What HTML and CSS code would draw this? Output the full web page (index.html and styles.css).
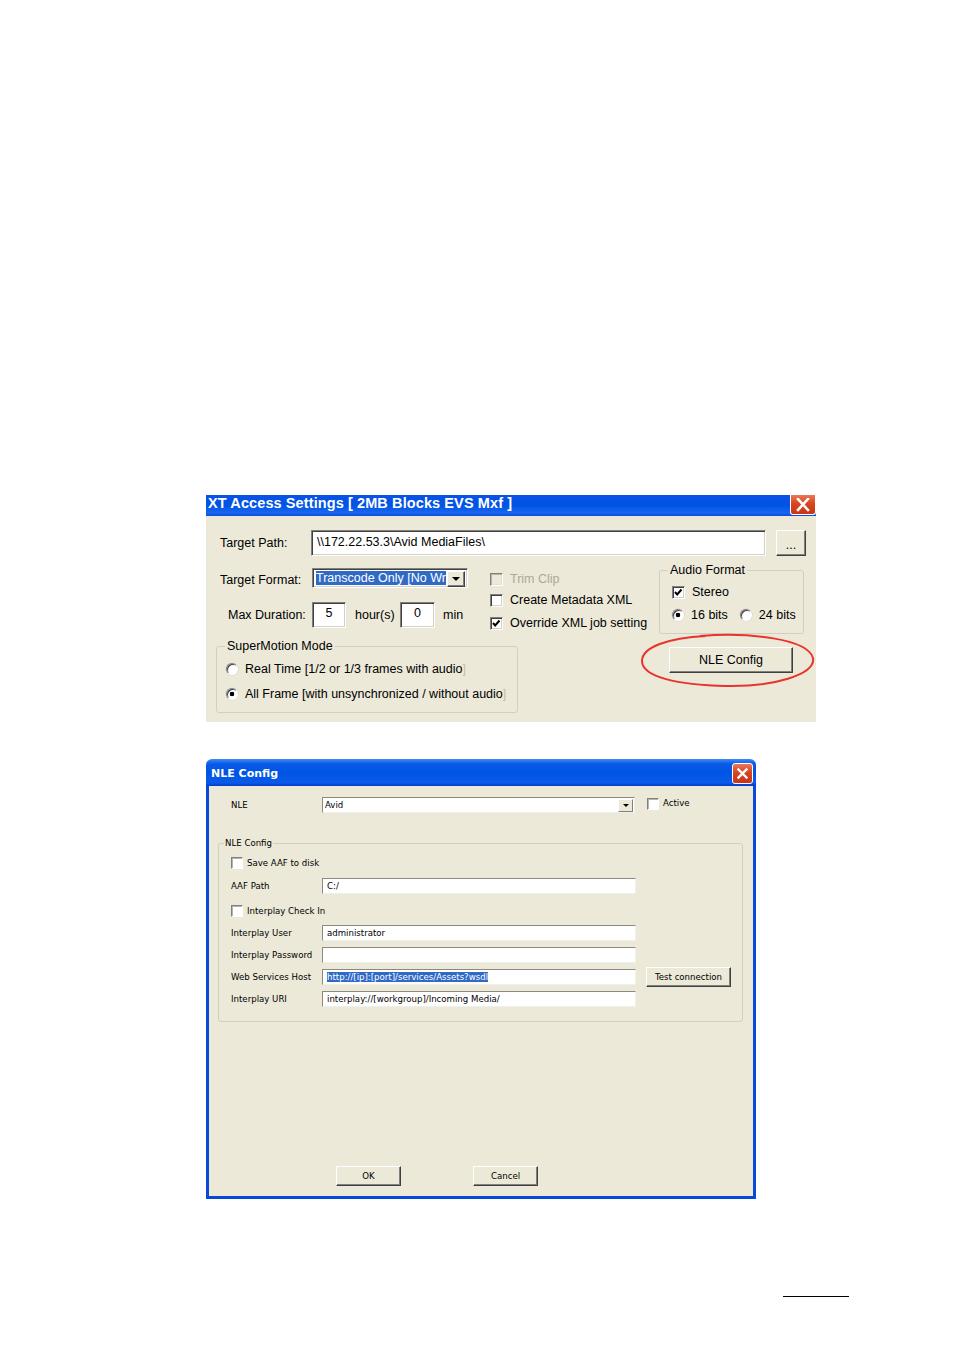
FILE: index.html
```html
<!DOCTYPE html>
<html lang="en">
<head>
    <meta charset="UTF-8">
    <title>XT Access Settings / NLE Config</title>
    <link rel="stylesheet" href="styles.css">
</head>
<body>
<div class="page">

    <!-- XT Access settings (cropped window) -->
    <div class="xt">
        <div class="xt-title">
            <span>XT Access Settings [ 2MB Blocks EVS Mxf ]</span>
            <div class="close close-xt">
                <svg width="16" height="14" viewBox="0 0 16 14"><path d="M3 1l10 11M13 1L3 12" stroke="#fff" stroke-width="2.6" stroke-linecap="square"/></svg>
            </div>
        </div>
        <div class="xt-body">
            <div class="xt-row">
                <span class="lbl-path">Target Path:</span>
                <div class="field path">\\172.22.53.3\Avid MediaFiles\</div>
                <div class="btn btn-dots">...</div>
            </div>

            <div class="xt-main">
                <div class="xt-left">
                    <div class="fmt-row">
                        <span class="lbl-fmt">Target Format:</span>
                        <div class="combo">
                            <div class="combo-text"><span class="hl">Transcode Only [No Wr</span></div>
                            <div class="combo-btn"><i class="tri"></i></div>
                        </div>
                    </div>
                    <div class="dur-row">
                        <span class="lbl-dur">Max Duration:</span>
                        <div class="field num">5</div>
                        <span class="lbl-hour">hour(s)</span>
                        <div class="field num num-min">0</div>
                        <span class="lbl-min">min</span>
                    </div>
                    <fieldset class="group sm-group">
                        <legend>SuperMotion Mode</legend>
                        <div class="opt"><span class="radio"></span>Real Time [1/2 or 1/3 frames with audio<span class="cut">]</span></div>
                        <div class="opt opt-2"><span class="radio on"></span>All Frame [with unsynchronized / without audio<span class="cut">]</span></div>
                    </fieldset>
                </div>

                <div class="xt-mid">
                    <div class="opt off"><span class="check dis"></span>Trim Clip</div>
                    <div class="opt opt-meta"><span class="check"></span>Create Metadata XML</div>
                    <div class="opt opt-over"><span class="check"><svg width="11" height="11" viewBox="0 0 11 11"><path d="M2 5l2.2 2.4L8.5 2.5" fill="none" stroke="#000" stroke-width="2"/></svg></span>Override XML job setting</div>
                </div>

                <div class="xt-right">
                    <fieldset class="group audio-group">
                        <legend>Audio Format</legend>
                        <div class="opt"><span class="check"><svg width="11" height="11" viewBox="0 0 11 11"><path d="M2 5l2.2 2.4L8.5 2.5" fill="none" stroke="#000" stroke-width="2"/></svg></span>Stereo</div>
                        <div class="opt opt-bits">
                            <span class="radio on"></span>16 bits
                            <span class="radio r24"></span>24 bits
                        </div>
                    </fieldset>
                    <div class="btn btn-nle">NLE Config</div>
                </div>
            </div>

            <svg class="ring" width="176" height="56" viewBox="0 0 176 56">
                <path d="M60 3 C 110 -1, 168 6, 173 25 C 176 42, 132 54, 86 53 C 38 52, 2 44, 2 28 C 2 14, 28 5, 66 3" fill="none" stroke="#e8342c" stroke-width="2"/>
            </svg>
        </div>
    </div>

    <!-- NLE Config window -->
    <div class="nle">
        <div class="nle-title">
            <span>NLE Config</span>
            <div class="close close-nle">
                <svg width="13" height="13" viewBox="0 0 13 13"><path d="M2.5 2.5l8 8M10.5 2.5l-8 8" stroke="#fff" stroke-width="2.4" stroke-linecap="square"/></svg>
            </div>
        </div>
        <div class="nle-body">
            <div class="nle-top">
                <span class="nlbl">NLE</span>
                <div class="xcombo"><span>Avid</span><div class="xcombo-btn"><i class="tri tri-s"></i></div></div>
                <span class="xcheck xcheck-active"></span><span class="active-txt">Active</span>
            </div>

            <fieldset class="group nle-group">
                <legend>NLE Config</legend>
                <div class="nrow chk"><span class="xcheck"></span>Save AAF to disk</div>
                <div class="nrow"><span class="nlbl">AAF Path</span><div class="xfield">C:/</div></div>
                <div class="nrow chk"><span class="xcheck"></span>Interplay Check In</div>
                <div class="nrow"><span class="nlbl">Interplay User</span><div class="xfield">administrator</div></div>
                <div class="nrow"><span class="nlbl">Interplay Password</span><div class="xfield"></div></div>
                <div class="nrow"><span class="nlbl">Web Services Host</span><div class="xfield"><span class="hl">http://[ip]:[port]/services/Assets?wsdl</span></div><div class="xbtn btn-test">Test connection</div></div>
                <div class="nrow"><span class="nlbl">Interplay URI</span><div class="xfield">interplay://[workgroup]/Incoming Media/</div></div>
            </fieldset>

            <div class="nle-actions">
                <div class="xbtn btn-ok">OK</div>
                <div class="xbtn btn-cancel">Cancel</div>
            </div>
        </div>
    </div>

    <div class="rule"></div>
</div>
</body>
</html>
```

FILE: styles.css
```css
* { margin: 0; padding: 0; box-sizing: border-box; }

body {
    background: #fff;
    font-family: "Liberation Sans", Arial, sans-serif;
    color: #000;
}

.page {
    padding: 495px 0 0 206px;
    height: 1350px;
    overflow: hidden;
}

/* ---------- shared bits ---------- */
.hl { background: #316ac5; color: #fff; }

.tri {
    display: block;
    width: 0;
    height: 0;
    border-left: 4px solid transparent;
    border-right: 4px solid transparent;
    border-top: 4px solid #000;
}
.tri-s { border-width: 3px 3px 0; }

.group {
    border: 1px solid #d0d0bf;
    border-radius: 3px;
}
.group legend { padding: 0 2px; }

.close {
    display: flex;
    align-items: center;
    justify-content: center;
    background: linear-gradient(180deg, #e8785a 0%, #d8461e 45%, #c8341a 100%);
    border: 1px solid #fff;
}

.opt {
    display: flex;
    align-items: center;
    height: 20px;
    white-space: nowrap;
}

.radio {
    display: inline-block;
    flex: none;
    width: 12px;
    height: 12px;
    border-radius: 50%;
    border: 1px solid;
    border-color: #808080 #fff #fff #808080;
    background: #fff;
    box-shadow: inset 1px 1px #404040, 0 0 0 0.5px #d4d0c8;
    margin-right: 7px;
}
.radio.on { background: radial-gradient(circle, #000 0 2px, #fff 2.6px); }

.check {
    display: inline-flex;
    align-items: center;
    justify-content: center;
    flex: none;
    width: 13px;
    height: 13px;
    border: 1px solid;
    border-color: #808080 #fff #fff #808080;
    box-shadow: inset 1px 1px #404040, inset -1px -1px #d4d0c8;
    background: #fff;
    margin-right: 7px;
}
.check.dis { background: #ece9d8; box-shadow: inset 1px 1px #b8b4a8, inset -1px -1px #e4e0d4; }

.field {
    background: #fff;
    border: 1px solid;
    border-color: #808080 #fff #fff #808080;
    box-shadow: inset 1px 1px #404040, inset -1px -1px #d4d0c8;
    white-space: nowrap;
    overflow: hidden;
}

.btn {
    display: flex;
    align-items: center;
    justify-content: center;
    background: #ece9d8;
    border: 1px solid;
    border-color: #fff #404040 #404040 #fff;
    box-shadow: inset -1px -1px #808080;
}

/* ---------- XT access settings ---------- */
.xt { width: 610px; }

.xt-title {
    height: 21px;
    display: flex;
    justify-content: space-between;
    background: linear-gradient(180deg, #0a52e6 0%, #0054e3 50%, #1a66f0 85%, #0a4ed8 100%);
    overflow: hidden;
}
.xt-title span {
    color: #fff;
    font-weight: bold;
    font-size: 14.5px;
    line-height: 17px;
    padding-left: 2px;
    letter-spacing: 0.1px;
}
.close-xt {
    width: 26px;
    height: 20px;
    border-top: none;
    border-radius: 0 0 3px 3px;
}

.xt-body {
    position: relative;
    height: 206px;
    background: #ece9d8;
    padding: 14px 10px 0 10px;
    font-size: 12.5px;
}

.xt-row {
    display: flex;
    align-items: center;
    padding-left: 4px;
}
.lbl-path { width: 91px; }
.path {
    width: 455px;
    height: 26px;
    line-height: 22px;
    padding-left: 5px;
}
.btn-dots {
    width: 30px;
    height: 26px;
    margin-left: 10px;
    padding-top: 4px;
}

.xt-main {
    display: flex;
    margin-top: 12px;
}

.xt-left { width: 274px; flex: none; }

.fmt-row {
    display: flex;
    align-items: center;
    height: 20px;
    padding-left: 4px;
}
.lbl-fmt { width: 92px; padding-top: 4px; }

.combo {
    display: flex;
    width: 156px;
    height: 20px;
    background: #fff;
    border: 1px solid;
    border-color: #808080 #fff #fff #808080;
    box-shadow: inset 1px 1px #404040, inset -1px -1px #d4d0c8;
    padding: 2px;
}
.combo-text {
    flex: 1;
    overflow: hidden;
    white-space: nowrap;
    line-height: 15px;
    padding-left: 1px;
}
.combo-btn {
    width: 18px;
    height: 16px;
    display: flex;
    align-items: center;
    justify-content: center;
    background: #ece9d8;
    border: 1px solid;
    border-color: #fff #404040 #404040 #fff;
    box-shadow: inset -1px -1px #808080;
}

.dur-row {
    display: flex;
    align-items: center;
    height: 26px;
    margin-top: 14px;
    padding-left: 12px;
}
.lbl-dur { width: 84px; }
.num {
    width: 34px;
    height: 26px;
    text-align: center;
    line-height: 20px;
}
.num-min { width: 35px; }
.lbl-hour { width: 45px; margin-left: 9px; }
.lbl-min { margin-left: 8px; }

.sm-group {
    width: 302px;
    height: 74px;
    margin-top: 11px;
    padding: 6px 0 0 9px;
}
.sm-group legend { margin-left: -1px; }
.opt-2 { margin-top: 5px; }
.cut { color: #c8c090; }

.xt-mid { width: 169px; flex: none; padding-top: 1px; }
.off { color: #aca899; }
.opt-meta { margin-top: 1px; }
.opt-over { margin-top: 3px; }

.xt-right { width: 147px; flex: none; margin-top: -5px; }
.audio-group {
    width: 145px;
    height: 71px;
    padding: 5px 0 0 12px;
}
.audio-group legend { margin-left: -4px; }
.opt-bits { margin-top: 3px; }
.r24 { margin-left: 12px; }

.btn-nle {
    width: 124px;
    height: 26px;
    margin: 13px 0 0 10px;
}

.ring {
    position: absolute;
    left: 434px;
    top: 117px;
}

/* ---------- NLE config window ---------- */
.nle {
    width: 550px;
    margin-top: 37px;
    font-family: "DejaVu Sans", Tahoma, sans-serif;
    font-size: 8.6px;
}

.nle-title {
    height: 27px;
    display: flex;
    justify-content: space-between;
    align-items: center;
    padding: 0 3px 0 5px;
    border-radius: 6px 6px 0 0;
    background: linear-gradient(180deg, #3d8cf6 0%, #0a5ae8 18%, #0054e3 50%, #0a5ae8 88%, #003ccc 100%);
}
.nle-title span {
    color: #fff;
    font-weight: bold;
    font-size: 11px;
    margin-top: 2px;
}
.close-nle {
    width: 21px;
    height: 21px;
    border-radius: 3px;
    margin-top: 2px;
}

.nle-body {
    height: 413px;
    background: #ece9d8;
    border: 3px solid #0a48d8;
    border-top: none;
    display: flex;
    flex-direction: column;
}

.nle-top {
    display: flex;
    align-items: center;
    height: 16px;
    margin-top: 11px;
    padding-left: 22px;
}
.nlbl { width: 91px; flex: none; }

.xcombo {
    display: flex;
    align-items: center;
    width: 313px;
    height: 16px;
    background: #fff;
    border: 1px solid;
    border-color: #8a8a80 #f0f0ea #f0f0ea #8a8a80;
    padding-left: 2px;
}
.xcombo span { flex: 1; }
.xcombo-btn {
    width: 15px;
    height: 13px;
    margin-right: 1px;
    display: flex;
    align-items: center;
    justify-content: center;
    background: #ece9d8;
    border: 1px solid;
    border-color: #fff #808080 #808080 #fff;
}

.xcheck {
    display: inline-block;
    flex: none;
    width: 12px;
    height: 12px;
    background: #fff;
    border: 1px solid;
    border-color: #808080 #fff #fff #808080;
    box-shadow: inset 1px 1px #b8b4a8;
    margin-right: 4px;
}
.xcheck-active { margin-left: 12px; margin-top: -3px; }
.active-txt { margin-top: -4px; }

.nle-group {
    width: 525px;
    height: 184px;
    margin: 25px 0 0 9px;
    padding: 7px 0 0 12px;
}
.nle-group legend { margin-left: -7px; padding: 0 1px; }

.nrow {
    display: flex;
    align-items: center;
    height: 16px;
    margin-top: 6px;
    white-space: nowrap;
}
.nrow:first-of-type { margin-top: 0; }
.nrow.chk { margin-top: 9px; }
.nrow.chk:first-of-type { margin-top: 0; }
.nrow.chk:first-of-type + .nrow { margin-top: 7px; }

.xfield {
    width: 314px;
    height: 16px;
    line-height: 14px;
    padding-left: 4px;
    background: #fff;
    border: 1px solid;
    border-color: #8a8a80 #f0f0ea #f0f0ea #8a8a80;
    overflow: hidden;
}

.xbtn {
    display: flex;
    align-items: center;
    justify-content: center;
    height: 20px;
    background: #ece9d8;
    border: 1px solid;
    border-color: #fff #404040 #404040 #fff;
    box-shadow: inset -1px -1px #808080;
}
.btn-test { width: 85px; margin-left: 10px; }

.nle-actions {
    display: flex;
    gap: 72px;
    margin-top: auto;
    padding: 0 0 10px 127px;
}
.btn-ok, .btn-cancel { width: 65px; }

.rule {
    width: 66px;
    height: 1px;
    background: #000;
    margin: 97px 0 0 577px;
}
```
